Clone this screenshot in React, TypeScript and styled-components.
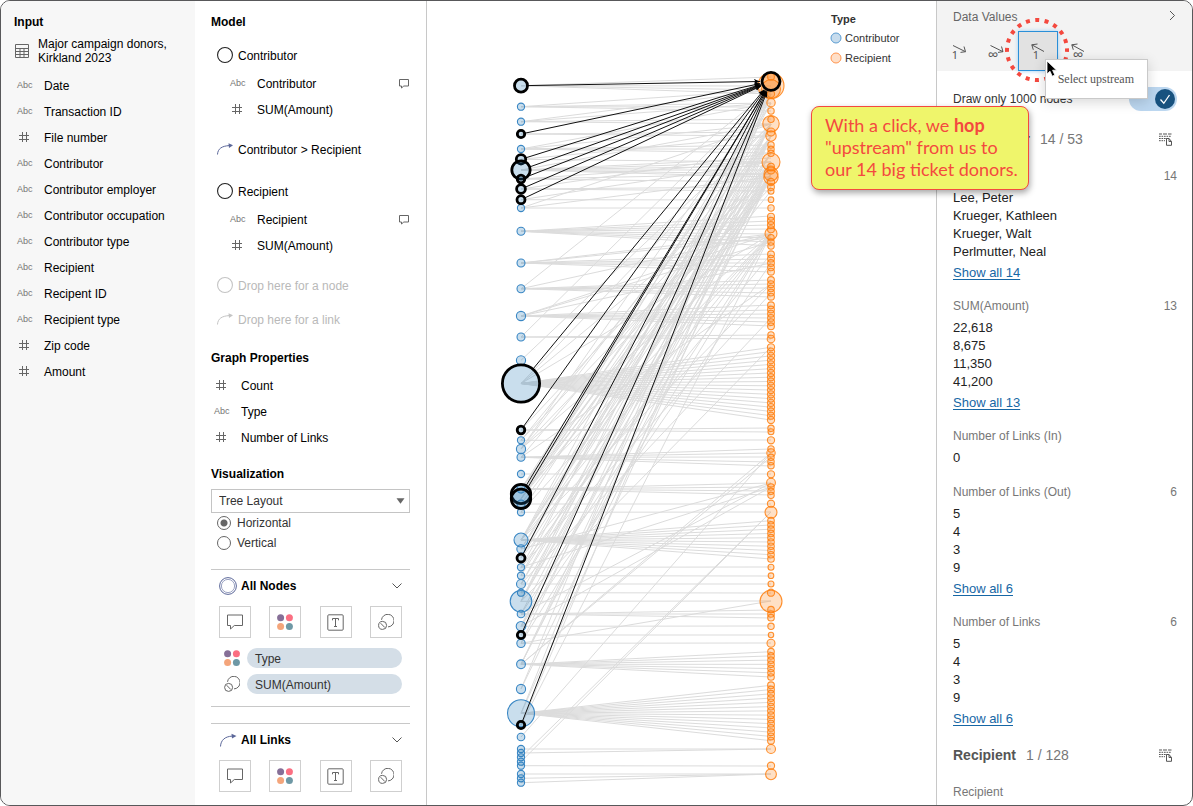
import React from 'react';
import styled, { createGlobalStyle } from 'styled-components';

const GlobalStyle = createGlobalStyle`
  * { box-sizing: border-box; }
  body { margin: 0; background: #fff; font-family: "Liberation Sans", Arial, sans-serif; font-size: 12px; line-height: 16px; color: #000; }
  button, select, input { font: inherit; color: inherit; margin: 0; }
  ul { list-style: none; margin: 0; padding: 0; }
  h2, h3, p { margin: 0; }
  svg { display: block; flex: none; }
`;

/* ---------- frame ---------- */

const Frame = styled.div`
  position: relative;
  display: grid;
  grid-template-columns: 194px 232px minmax(0, 1fr) 256px;
  height: 100vh;
  border: 1px solid #58585a;
  border-radius: 10px;
  overflow: hidden;
`;

const InputPanel = styled.aside`
  background: #f7f7f7;
  padding: 13px 13px 0;
  min-height: 0;
`;

const ModelPanel = styled.section`
  padding: 13px 16px 0;
  border-right: 1px solid #c8c8c8;
  min-height: 0;
  overflow: hidden;
`;

const GraphPanel = styled.main`
  display: flex;
  align-items: flex-start;
  min-width: 0;
  min-height: 0;
  overflow: hidden;
`;

const ValuesPanel = styled.aside`
  border-left: 1px solid #c8c8c8;
  min-height: 0;
  overflow: hidden;
`;

const Heading = styled.h2<{ $spaced?: boolean }>`
  font-size: 12px;
  line-height: 16px;
  font-weight: 700;
  margin-top: ${(p) => (p.$spaced ? '15px' : '0')};
`;

/* ---------- fields ---------- */

const Source = styled.div`
  display: flex;
  align-items: center;
  gap: 9px;
  margin: 7px 0 8px;
  padding-left: 1px;
  line-height: 14px;
`;

const FieldItem = styled.li<{ $indent: number }>`
  display: flex;
  align-items: center;
  height: 26px;
  padding-left: ${(p) => p.$indent}px;
  padding-right: 1px;
`;

const FieldKind = styled.span`
  width: 27px;
  flex: none;
  font-size: 9px;
  line-height: 12px;
  color: #757575;
  padding-bottom: 2px;
`;

const FieldName = styled.span`
  flex: 1;
  white-space: nowrap;
`;

const ElementRow = styled.div<{ $gap: number; $muted?: boolean }>`
  display: flex;
  align-items: center;
  gap: 5px;
  height: 30px;
  margin-top: ${(p) => p.$gap}px;
  padding-left: 6px;
  color: ${(p) => (p.$muted ? '#b9b9b9' : '#000')};
`;

const FieldList = styled.ul<{ $top?: number }>`
  margin-top: ${(p) => p.$top ?? 0}px;
`;

const HashIcon = () => (
  <svg width="16" height="11" viewBox="0 0 16 11" fill="none" stroke="#666" strokeWidth="1">
    <path d="M5.5 0v10M9.5 0v10M2 3.5h10M2 7.5h10" />
  </svg>
);

const TableIcon = () => (
  <svg width="14" height="14" viewBox="0 0 14 14" fill="none" stroke="#666">
    <path d="M.5.5h13v13H.5zM.5 4.5h13M.5 7.5h13M.5 10.5h13M5 4.5v9M9 4.5v9" />
  </svg>
);

const NoteIcon = () => (
  <svg width="10" height="12" viewBox="0 0 10 12" fill="none" stroke="#666">
    <path d="M.5 1.500h9v6.500H4.800L2.500 10V8h-2z" />
  </svg>
);

const CircleIcon = ({ color = '#222' }: { color?: string }) => (
  <svg width="16" height="19" viewBox="0 0 16 19" fill="none" stroke={color} strokeWidth="1.1">
    <circle cx="8" cy="8" r="7.450" />
  </svg>
);

const CurveIcon = ({ color = '#5b6799' }: { color?: string }) => (
  <svg width="16" height="16" viewBox="0 0 16 16" fill="none" stroke={color} strokeWidth="1">
    <path d="M.5 12.5C.8 6.5 5 4.1 12 3.6" />
    <path d="M11.500 1.200 16 3.300l-4 2.600z" fill={color} stroke="none" />
  </svg>
);

type FieldSpec = { name: string; kind: 'text' | 'number'; note?: boolean };

const Field = ({ name, kind, note, indent }: FieldSpec & { indent: number }) => (
  <FieldItem $indent={indent}>
    <FieldKind>{kind === 'text' ? 'Abc' : <HashIcon />}</FieldKind>
    <FieldName>{name}</FieldName>
    {note && <NoteIcon />}
  </FieldItem>
);

const inputFields: FieldSpec[] = [
  { name: 'Date', kind: 'text' },
  { name: 'Transaction ID', kind: 'text' },
  { name: 'File number', kind: 'number' },
  { name: 'Contributor', kind: 'text' },
  { name: 'Contributor employer', kind: 'text' },
  { name: 'Contributor occupation', kind: 'text' },
  { name: 'Contributor type', kind: 'text' },
  { name: 'Recipient', kind: 'text' },
  { name: 'Recipent ID', kind: 'text' },
  { name: 'Recipient type', kind: 'text' },
  { name: 'Zip code', kind: 'number' },
  { name: 'Amount', kind: 'number' },
];

/* ---------- visualization controls ---------- */

const SelectBox = styled.div`
  position: relative;
  margin-top: 7px;
  svg { position: absolute; right: 5px; top: 9px; pointer-events: none; }
`;

const Select = styled.select`
  appearance: none;
  display: block;
  width: 100%;
  height: 24px;
  padding: 0 7px;
  border: 1px solid #c4c4c4;
  border-radius: 0;
  background: #fff;
  color: #333;
`;

const RadioLabel = styled.label`
  display: flex;
  align-items: center;
  gap: 6px;
  height: 20px;
  padding-left: 6px;
  color: #333;
`;

const Radio = styled.input`
  appearance: none;
  width: 14px;
  height: 14px;
  border: 1px solid #666;
  border-radius: 50%;
  background: #fff;
  &:checked { background: radial-gradient(circle, #666 3px, #fff 4px); }
`;

const MarkSection = styled.section<{ $closed?: boolean }>`
  margin-top: 16px;
  padding: 0 8px 9px;
  border-top: 1px solid #c8c8c8;
  border-bottom: ${(p) => (p.$closed ? '1px solid #c8c8c8' : '0')};
`;

const MarkHeader = styled.div`
  display: flex;
  align-items: center;
  gap: 4px;
  height: 32px;
  margin-bottom: 4px;
  h2 { flex: 1; }
`;

const MarkButtons = styled.div`
  display: flex;
  justify-content: space-between;
  margin-bottom: 7px;
`;

const MarkButton = styled.button`
  display: grid;
  place-items: center;
  width: 32px;
  height: 32px;
  padding: 0;
  border: 1px solid #cfcfcf;
  background: #fff;
`;

const PillRow = styled.div`
  display: flex;
  align-items: center;
  gap: 7px;
  height: 26px;
  padding-left: 5px;
`;

const Pill = styled.span`
  flex: 1;
  height: 20px;
  padding: 0 8px;
  border-radius: 10px;
  background: #d4dee7;
  color: #333;
  line-height: 22px;
`;

const PlainButton = styled.button`
  display: grid;
  place-items: center;
  padding: 0;
  border: 0;
  background: none;
`;

const ChevronDown = () => (
  <svg width="10" height="6" viewBox="0 0 10 6" fill="none" stroke="#555">
    <path d="M.5.5 5 5 9.5.5" />
  </svg>
);

const DotsIcon = () => (
  <svg width="16" height="16" viewBox="0 0 16 16">
    <circle cx="3.6" cy="3.7" r="3.5" fill="#866f97" />
    <circle cx="12.4" cy="3.7" r="3.5" fill="#fb6f82" />
    <circle cx="3.6" cy="12.5" r="3.5" fill="#f4a57b" />
    <circle cx="12.4" cy="12.5" r="3.5" fill="#6e98a5" />
  </svg>
);

const LabelIcon = () => (
  <svg width="17" height="17" viewBox="0 0 17 17" fill="none" stroke="#666">
    <rect x=".8" y=".8" width="15.4" height="15.4" rx="1" />
    <path d="M5.5 6.3V4.5h6v1.8M8.5 4.5v8M7 12.5h3" />
  </svg>
);

const SizeIcon = () => (
  <svg width="16" height="16" viewBox="0 0 16 16" fill="none" stroke="#666">
    <path d="M3.500 5.800A6.300 6.300 0 1 1 10 12.900" />
    <circle cx="4.6" cy="11.4" r="4" />
    <path d="m2.600 9.200 4.200 4.300" />
  </svg>
);

const RingIcon = () => (
  <svg width="18" height="18" viewBox="0 0 18 18" fill="none">
    <circle cx="9" cy="9" r="8.4" stroke="#5b6799" />
    <circle cx="9" cy="9" r="6.6" stroke="#8f97bb" strokeWidth=".9" />
  </svg>
);

const MarkTools = () => (
  <MarkButtons>
    <MarkButton aria-label="Tooltip">
      <svg width="16" height="16" viewBox="0 0 16 16" fill="none" stroke="#666">
        <path d="M.5 1h15v10.500H7.300L3.500 15v-3.500h-3z" />
      </svg>
    </MarkButton>
    <MarkButton aria-label="Color"><DotsIcon /></MarkButton>
    <MarkButton aria-label="Label"><LabelIcon /></MarkButton>
    <MarkButton aria-label="Size"><SizeIcon /></MarkButton>
  </MarkButtons>
);

/* ---------- graph ---------- */

const Canvas = styled.svg`
  flex: 1;
  min-width: 0;
`;

const Legend = styled.div`
  flex: none;
  width: 106px;
  padding-top: 9px;
  color: #333;
  font-size: 11px;
`;

const LegendTitle = styled.h3`
  font-size: 11px;
  line-height: 18px;
  padding-left: 1px;
`;

const LegendItem = styled.div`
  display: flex;
  align-items: center;
  gap: 3px;
  height: 20px;
`;

const LEFT = 521;
const RIGHT = 771;

type GraphNode = { y: number; r: number; on?: boolean };
const n = (y: number, r = 3.6, on = false): GraphNode => ({ y, r, on });
const run = (from: number, to: number, count: number) =>
  Array.from({ length: count }, (_, i) => from + ((to - from) * i) / (count - 1));

const contributors: GraphNode[] = [
  n(106.7), n(121.7), n(149), n(208), n(231.3, 4), n(263, 4), n(288.7, 4), n(316, 4.6), n(337, 4),
  n(360.3, 4.6), n(440.3), n(449, 4.6), n(457.3, 4), n(474), n(489, 4), n(504, 4), n(512.3), n(540, 7),
  n(549, 4.2), n(567.3), n(575.7), n(584, 4.5), n(592.7), n(601.3, 10.8), n(614, 3.8), n(626.3, 4.8),
  n(643.3, 4.2), n(664.3, 4.4), n(689, 4.6), n(713.3, 13.5), n(737, 3.8), n(749), n(753), n(757.3),
  n(761.7), n(765.7), n(774), n(778.3), n(782.7),
  n(85.7, 6.5, true), n(134, 3.7, true), n(159.3, 4.7, true), n(170, 9.2, true), n(179, 3.8, true),
  n(189, 4.4, true), n(199.7, 4, true), n(383.5, 18.6, true), n(430, 3.8, true), n(494, 9.7, true),
  n(498.8, 9.7, true), n(558, 4, true), n(635, 3.7, true), n(725, 3.7, true),
];

const recipients: GraphNode[] = [
  n(76.7, 3.4), n(85.7, 13), n(89, 9.5), n(94), n(102.7, 4.2), n(111, 3.2), n(119.3, 3.2), n(123.7, 8.2),
  n(132, 4), n(136, 5.2), n(145, 3.2), n(149.3, 3.2), n(153.3, 3.2), n(162, 9), n(166.7, 3.4), n(170, 4),
  n(174, 7), n(177.3, 7.2), n(182), n(187, 3.4), n(191.3, 3), n(199.7, 2.8), n(208, 3.2),
  ...run(216.7, 229.3, 4).map((y) => n(y, 3.5)),
  n(233.7, 6), n(237.7, 3.2), n(242, 3.2), n(246, 3.2),
  ...run(254.3, 271.7, 5).map((y) => n(y, 3.4)),
  ...run(280, 296.7, 5).map((y) => n(y, 3.4)),
  ...run(305.3, 326.3, 6).map((y) => n(y, 3.4)),
  n(335, 3.2), n(339, 3.8),
  ...run(347.3, 420, 18).map((y) => n(y, 3.6)),
  n(428.3, 3.2), n(431.7, 3), n(440.3), n(449, 3.2), n(453, 4.2), n(457.3, 3.2), n(461.7, 3.2), n(465.7, 3.2),
  n(474.3), n(482.7, 4.4), n(487, 3.2), n(491.3, 3.2), n(495.3, 3.2), n(503.7), n(512.3, 6),
  ...run(520.7, 559, 10).map((y) => n(y, 3.3)),
  n(567.3, 3), n(575.7, 2.8), n(584, 3), n(592.7), n(601.3, 11),
  n(609.7, 3.3), n(614, 3.3), n(617.7, 3.3), n(626.3, 3.2), n(635, 2.7), n(643.3, 4),
  ...run(651.7, 677, 7).map((y) => n(y, 3.3)),
  ...run(685.3, 740.7, 14).map((y) => n(y, 3.4)),
  n(749, 4.5), n(765.7, 3.6), n(774.3, 5.4),
];

const links: [number, number[]][] = [
  [85.7, [77, 86, 90, 94]],
  [106.7, [90, 103, 107, 111]],
  [121.7, [90, 103, 119, 124]],
  [134, [132, 136]],
  [149, [103, 124, 145, 149, 153]],
  [159.3, [136, 162]],
  [170, [124, 158, 162, 166, 170, 174, 177]],
  [179, [162, 174, 182]],
  [189, [153, 187, 191]],
  [199.7, [162, 200]],
  [208, [124, 177, 208]],
  [231.3, [216, 221, 225, 229, 234, 238, 242, 246]],
  [263, [234, 238, 254, 259, 263, 267, 272]],
  [288.7, [90, 234, 280, 284, 288, 293, 297]],
  [316, [234, 242, 263, 305, 310, 314, 318, 322, 326]],
  [337, [90, 335, 339]],
  [360.3, [124]],
  [383.5, [124, 177, 234, ...run(347.3, 420, 18)]],
  [430, [162, 428, 432]],
  [440.3, [136, 177, 440]],
  [449, [90, 124, 187, 234]],
  [457.3, [162, 284, 449, 453, 457, 462, 466]],
  [474, [474]],
  [489, [103, 136, 162, 483, 487, 491, 495]],
  [494, [124, 153, 177, 234]],
  [498.8, [94, 136, 162, 191]],
  [504, [174, 504]],
  [512.3, [136, 234, 512]],
  [540, [90, 124, 153, 162, 177, 234, 284, ...run(520.7, 559, 10)]],
  [549, [136, 174, 483]],
  [558, [103, 162, 254]],
  [567.3, [124, 234, 293, 487, 567]],
  [575.7, [90, 177, 576]],
  [584, [136, 174, 318, 584]],
  [592.7, [153, 593]],
  [601.3, [90, 124, 162, 177, 347, 601]],
  [614, [136, 234, 483, 610, 614, 618]],
  [626.3, [94, 174, 263, 487, 626]],
  [635, [162, 635]],
  [643.3, [124, 234, 601, 643]],
  [664.3, [136, 162, 177, 453, 457, ...run(651.7, 677, 7)]],
  [689, [90, 174]],
  [713.3, [94, 162, ...run(685.3, 740.7, 14)]],
  [725, [136, 234]],
  [737, [453]],
  [749, [749]],
  [753, [749]],
  [757.3, [512]],
  [761.7, [512]],
  [765.7, [766]],
  [774, [774]],
  [778.3, [774]],
  [782.7, [774]],
];

const HUB = { y: 81.3, r: 9 };

const donorLine = (node: GraphNode) => {
  const dx = RIGHT - LEFT;
  const dy = HUB.y - node.y;
  const len = Math.hypot(dx, dy);
  const ux = dx / len;
  const uy = dy / len;
  return {
    x1: LEFT + ux * node.r,
    y1: node.y + uy * node.r,
    x2: RIGHT - ux * (HUB.r + 2),
    y2: HUB.y - uy * (HUB.r + 2),
  };
};

const Graph = () => (
  <Canvas viewBox="427 1 403 804" height="804" preserveAspectRatio="xMinYMin" role="img" aria-label="Contributor to recipient graph">
    <defs>
      <marker id="tip" markerWidth="7" markerHeight="6" refX="6" refY="3" orient="auto" markerUnits="userSpaceOnUse">
        <path d="M0 .500 6 3 0 5.500 1.500 3z" />
      </marker>
    </defs>
    <g stroke="#d6d6d6" strokeWidth="1" opacity=".85">
      {links.flatMap(([from, targets]) =>
        targets.map((to, i) => <line key={`${from}-${i}`} x1={LEFT} y1={from} x2={RIGHT} y2={to} />),
      )}
    </g>
    <g fill="#1f77b4" fillOpacity=".24" stroke="#3a87c4" strokeWidth="1.1">
      {contributors.filter((c) => !c.on).map((c) => <circle key={c.y} cx={LEFT} cy={c.y} r={c.r} />)}
    </g>
    <g fill="#ff7f0e" fillOpacity=".24" stroke="#ff7f0e" strokeOpacity=".85" strokeWidth="1.1">
      {recipients.map((c) => <circle key={c.y} cx={RIGHT} cy={c.y} r={c.r} />)}
    </g>
    <g stroke="#111" strokeWidth="1">
      {contributors.filter((c) => c.on).map((c) => <line key={c.y} {...donorLine(c)} markerEnd="url(#tip)" />)}
    </g>
    <g fill="#1f77b4" fillOpacity=".24" stroke="#000" strokeWidth="2.8">
      {contributors.filter((c) => c.on).map((c) => <circle key={c.y} cx={LEFT} cy={c.y} r={c.r} />)}
    </g>
    <circle cx={RIGHT} cy={HUB.y} r={HUB.r} fill="#ff7f0e" fillOpacity=".3" stroke="#000" strokeWidth="2.8" />
  </Canvas>
);

/* ---------- data values ---------- */

const ValuesHeader = styled.header`
  height: 70px;
  background: #f3f3f3;
`;

const ValuesTitle = styled.div`
  display: flex;
  align-items: center;
  justify-content: space-between;
  height: 30px;
  padding: 1px 16px 0;
  color: #666;
  h2 { font-size: 12px; font-weight: 400; }
`;

const HopBar = styled.div`
  display: flex;
  padding-left: 1px;
`;

const HopButton = styled.button<{ $active?: boolean }>`
  display: grid;
  place-items: center;
  width: 40px;
  height: 40px;
  padding: 0;
  border: 1px solid ${(p) => (p.$active ? '#2a8fd8' : 'transparent')};
  background: ${(p) => (p.$active ? '#e2e2e2' : 'transparent')};
  box-shadow: ${(p) => (p.$active ? '0 0 4px #9ccbf0' : 'none')};
`;

const HopText = styled.text`
  font-family: "Noto Sans", "Open Sans", sans-serif;
  fill: #555;
`;

const HopIcon = ({ up, all }: { up?: boolean; all?: boolean }) => (
  <svg width="26" height="24" viewBox="0 0 26 24" fill="none" stroke="#555">
    <path d={up ? 'M19 12.500 6.800 5.800M8.300 10.800 6.800 5.800 12.500 5' : all ? 'M5.500 6.500 18 12.700M13 13.400 18 12.700 16.500 7.500' : 'M8 6.500 20.500 12.700M15.500 13.400 20.500 12.700 19 7.500'} />
    <HopText stroke="none" x={up ? (all ? 13 : 11) : all ? 8 : 10} y={all ? 21 : 20} fontSize={all ? 15 : 11} textAnchor="middle">
      {all ? '∞' : '1'}
    </HopText>
  </svg>
);

const ValuesBody = styled.div`
  padding: 16px 15px 0 16px;
`;

const ToggleRow = styled.label`
  display: flex;
  align-items: center;
  justify-content: space-between;
  height: 24px;
  margin-bottom: 17px;
  color: #333;
`;

const Toggle = styled.span`
  position: relative;
  svg { position: absolute; right: 2px; top: 2px; pointer-events: none; }
`;

const ToggleInput = styled.input`
  appearance: none;
  display: block;
  width: 48px;
  height: 24px;
  border-radius: 12px;
  background: #bcd7f0;
`;

const GroupTitle = styled.div`
  display: flex;
  align-items: center;
  height: 22px;
  margin-bottom: 18px;
  font-size: 14px;
  color: #777;
  h2 { font-size: 14px; color: #555; margin-right: 10px; }
  button { margin-left: auto; margin-right: 5px; }
`;

const ValueLabel = styled.div`
  display: flex;
  justify-content: space-between;
  height: 16px;
  margin-bottom: 5px;
  color: #777;
`;

const ValueGroup = styled.section`
  padding-bottom: 17px;
  color: #222;
  font-size: 13px;
  li { line-height: 18px; }
  ${ValueLabel} { font-size: 12px; }
`;

const ShowAll = styled.a`
  display: block;
  width: max-content;
  padding-top: 3px;
  line-height: 17px;
  color: #1667a5;
  text-underline-offset: 2px;
`;

const SheetIcon = () => (
  <svg width="13" height="13" viewBox="0 0 13 13" fill="none" stroke="#555">
    <path d="M0 1h3M4 1h4M9 1h3.500" strokeWidth="1.2" />
    <path d="M0 3.300h12.500M0 5.500h8M0 7.700h6" strokeDasharray="1.700 .8" />
    <path d="M7.500 5.500v6.800h5V8.500l-2.500-3zM10 5.500v3h2.500" />
  </svg>
);

type ValuesProps = { label?: string; total?: number; items: string[]; more?: string };

const Values = ({ label, total, items, more }: ValuesProps) => (
  <ValueGroup>
    <ValueLabel><span>{label}</span><span>{total}</span></ValueLabel>
    <ul>{items.map((v) => <li key={v}>{v}</li>)}</ul>
    {more && <ShowAll href="#all">{more}</ShowAll>}
  </ValueGroup>
);

/* ---------- overlays ---------- */

const HighlightRing = styled.svg`
  position: absolute;
  top: 15px;
  right: 121px;
  pointer-events: none;
`;

const Tooltip = styled.div`
  position: absolute;
  top: 58px;
  right: 44px;
  padding: 11px 13px 11px 12px;
  border: 1px solid #c9c9c9;
  background: #fff;
  box-shadow: 0 3px 12px rgba(0, 0, 0, 0.16);
  color: #555;
  font: 12px/16px "Liberation Serif", serif;
`;

const Cursor = styled.svg`
  position: absolute;
  top: 59px;
  right: 134px;
`;

const Callout = styled.p`
  position: absolute;
  top: 105px;
  right: 163px;
  width: 218px;
  padding: 7px 13px 9px;
  border: 1px solid #f4493f;
  border-radius: 8px;
  background: #eff56b;
  box-shadow: 1px 3px 6px rgba(0, 0, 0, 0.35);
  color: #f4493f;
  font: 18px/22px Lato, sans-serif;
  white-space: nowrap;
`;

export default function App() {
  return (
    <Frame>
      <GlobalStyle />
      <InputPanel>
        <Heading>Input</Heading>
        <Source>
          <TableIcon />
          <span>Major campaign donors,<br />Kirkland 2023</span>
        </Source>
        <FieldList>
          {inputFields.map((f) => <Field key={f.name} {...f} indent={3} />)}
        </FieldList>
      </InputPanel>

      <ModelPanel>
        <Heading>Model</Heading>
        <ElementRow $gap={11}><CircleIcon />Contributor</ElementRow>
        <FieldList>
          <Field name="Contributor" kind="text" note indent={19} />
          <Field name="SUM(Amount)" kind="number" indent={19} />
        </FieldList>
        <ElementRow $gap={12}><CurveIcon />Contributor &gt; Recipient</ElementRow>
        <ElementRow $gap={12}><CircleIcon />Recipient</ElementRow>
        <FieldList>
          <Field name="Recipient" kind="text" note indent={19} />
          <Field name="SUM(Amount)" kind="number" indent={19} />
        </FieldList>
        <ElementRow $gap={12} $muted><CircleIcon color="#c4c4c4" />Drop here for a node</ElementRow>
        <ElementRow $gap={4} $muted><CurveIcon color="#c4c4c4" />Drop here for a link</ElementRow>

        <Heading $spaced>Graph Properties</Heading>
        <FieldList $top={7}>
          <Field name="Count" kind="number" indent={3} />
          <Field name="Type" kind="text" indent={3} />
          <Field name="Number of Links" kind="number" indent={3} />
        </FieldList>

        <Heading $spaced>Visualization</Heading>
        <SelectBox>
          <Select aria-label="Visualization" defaultValue="Tree Layout">
            <option>Tree Layout</option>
          </Select>
          <svg width="9" height="6" viewBox="0 0 9 6"><path d="M.5.300h8L4.500 5.700z" fill="#666" /></svg>
        </SelectBox>
        <RadioLabel><Radio type="radio" name="direction" defaultChecked />Horizontal</RadioLabel>
        <RadioLabel><Radio type="radio" name="direction" />Vertical</RadioLabel>

        <MarkSection $closed>
          <MarkHeader>
            <RingIcon />
            <Heading>All Nodes</Heading>
            <PlainButton aria-label="Collapse nodes"><ChevronDown /></PlainButton>
          </MarkHeader>
          <MarkTools />
          <PillRow><DotsIcon /><Pill>Type</Pill></PillRow>
          <PillRow><SizeIcon /><Pill>SUM(Amount)</Pill></PillRow>
        </MarkSection>
        <MarkSection>
          <MarkHeader>
            <svg width="18" height="18" viewBox="-1 -1 18 18" fill="none" stroke="#5b6799">
              <path d="M.5 14.500C.8 8 5 4.600 12 4.100" />
              <path d="M11.500 1.700 16.500 3.900l-4.500 2.700z" fill="#5b6799" stroke="none" />
            </svg>
            <Heading>All Links</Heading>
            <PlainButton aria-label="Collapse links"><ChevronDown /></PlainButton>
          </MarkHeader>
          <MarkTools />
        </MarkSection>
      </ModelPanel>

      <GraphPanel>
        <Graph />
        <Legend>
          <LegendTitle>Type</LegendTitle>
          <LegendItem>
            <svg width="12" height="12"><circle cx="6" cy="6" r="5" fill="#c7dced" stroke="#5a9bd0" /></svg>
            Contributor
          </LegendItem>
          <LegendItem>
            <svg width="12" height="12"><circle cx="6" cy="6" r="5" fill="#ffdfc8" stroke="#ff944d" /></svg>
            Recipient
          </LegendItem>
        </Legend>
      </GraphPanel>

      <ValuesPanel>
        <ValuesHeader>
          <ValuesTitle>
            <h2>Data Values</h2>
            <PlainButton aria-label="Close panel">
              <svg width="7" height="13" viewBox="0 0 7 13" fill="none" stroke="#555"><path d="m1 1 4.500 4.500L1 10" /></svg>
            </PlainButton>
          </ValuesTitle>
          <HopBar>
            <HopButton aria-label="Select downstream"><HopIcon /></HopButton>
            <HopButton aria-label="Select all downstream"><HopIcon all /></HopButton>
            <HopButton aria-label="Select upstream" $active><HopIcon up /></HopButton>
            <HopButton aria-label="Select all upstream"><HopIcon up all /></HopButton>
          </HopBar>
        </ValuesHeader>
        <ValuesBody>
          <ToggleRow>
            Draw only 1000 nodes
            <Toggle>
              <ToggleInput type="checkbox" defaultChecked />
              <svg width="20" height="20" viewBox="0 0 20 20" fill="none">
                <circle cx="10" cy="10" r="10" fill="#18527f" />
                <path d="m5.500 10.500 3.300 3.800 5.700-8.300" stroke="#fff" strokeWidth="1.300" />
              </svg>
            </Toggle>
          </ToggleRow>
          <GroupTitle>
            <h2>Contributor</h2>14 / 53
            <PlainButton aria-label="View contributor data"><SheetIcon /></PlainButton>
          </GroupTitle>
          <Values total={14} items={['Lee, Peter', 'Krueger, Kathleen', 'Krueger, Walt', 'Perlmutter, Neal']} more="Show all 14" />
          <Values label="SUM(Amount)" total={13} items={['22,618', '8,675', '11,350', '41,200']} more="Show all 13" />
          <Values label="Number of Links (In)" items={['0']} />
          <Values label="Number of Links (Out)" total={6} items={['5', '4', '3', '9']} more="Show all 6" />
          <Values label="Number of Links" total={6} items={['5', '4', '3', '9']} more="Show all 6" />
          <GroupTitle>
            <h2>Recipient</h2>1 / 128
            <PlainButton aria-label="View recipient data"><SheetIcon /></PlainButton>
          </GroupTitle>
          <ValueLabel>Recipient</ValueLabel>
        </ValuesBody>
      </ValuesPanel>

      <HighlightRing width="68" height="68" viewBox="0 0 68 68" fill="none">
        <circle cx="34" cy="34" r="30" stroke="#f4493f" strokeWidth="4" strokeDasharray="4 5.425" strokeDashoffset="2" />
      </HighlightRing>
      <Tooltip role="tooltip">Select upstream</Tooltip>
      <Cursor width="12" height="18" viewBox="0 0 12 18">
        <path d="M1 1v13l3-2.800 2.200 5 2.600-1.200-2.200-4.800h4z" fill="#000" stroke="#fff" strokeWidth=".8" />
      </Cursor>
      <Callout>
        With a click, we <b>hop</b><br />"upstream" from us to<br />our 14 big ticket donors.
      </Callout>
    </Frame>
  );
}
